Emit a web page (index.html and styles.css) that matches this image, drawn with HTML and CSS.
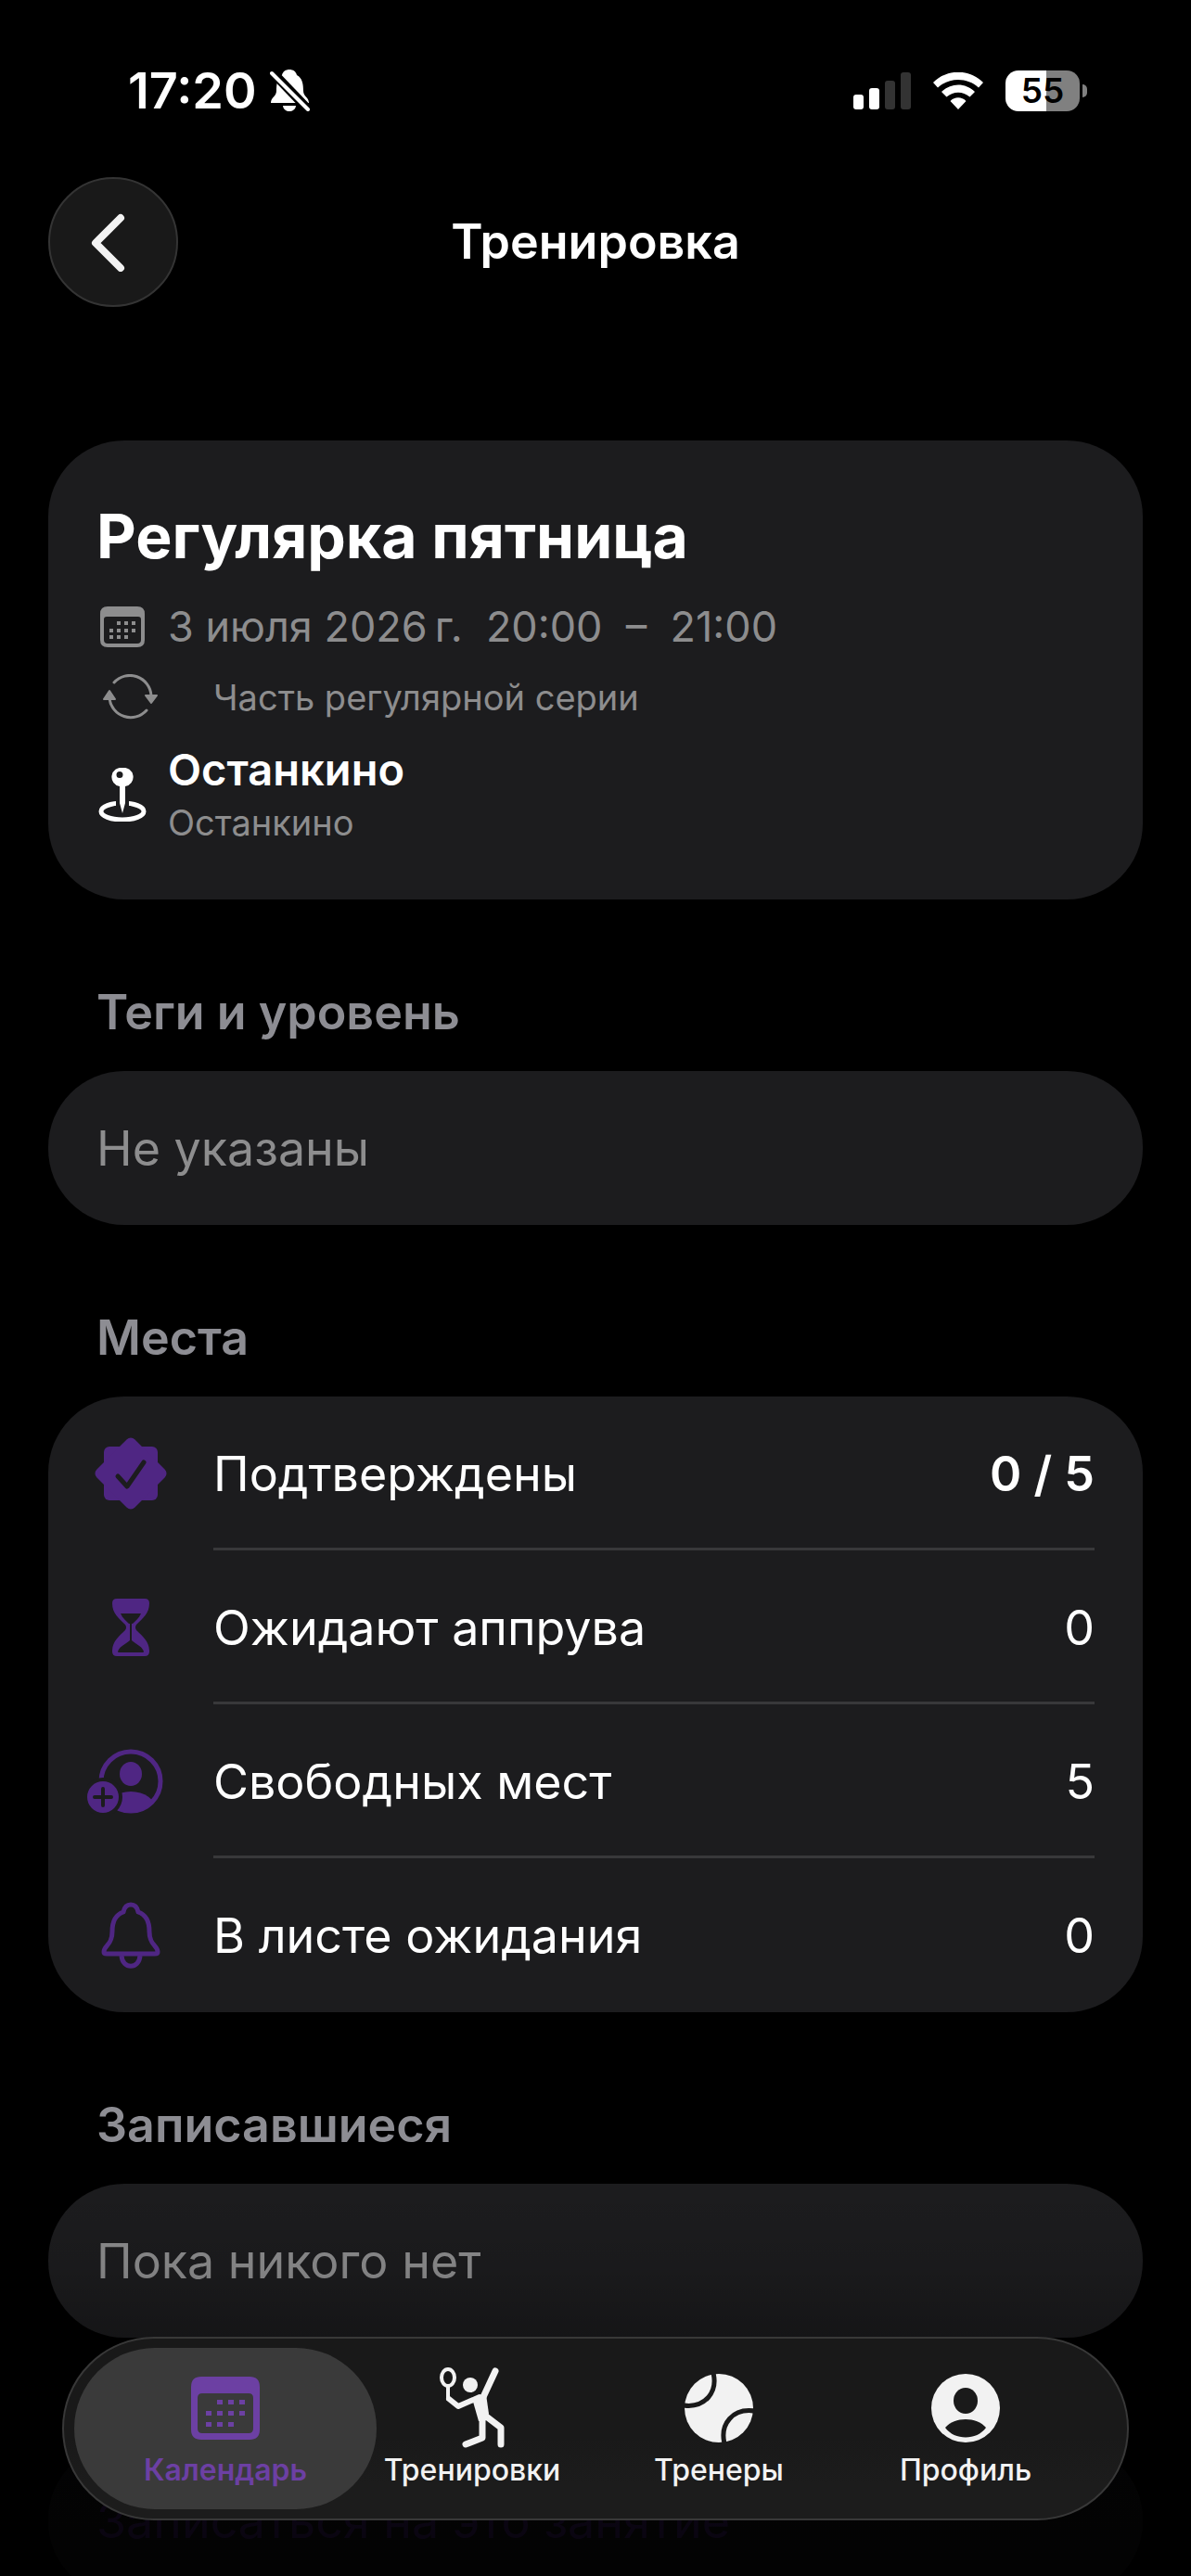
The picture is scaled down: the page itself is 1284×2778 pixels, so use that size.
FILE: index.html
```html
<!DOCTYPE html>
<html lang="ru">
<head>
    <meta charset="UTF-8">
    <meta name="viewport" content="width=device-width, initial-scale=1.0">
    <title>Тренировка</title>
    <link rel="stylesheet" href="styles.css">
</head>
<body>
    <div class="status-bar">
        <div class="status-left">
            <span class="clock">17:20</span>
            <svg width="43" height="46" viewBox="0 0 43 46">
                <path fill="#fff" d="M21 0C25 0 28 2 29 6C35 9 36 16 36 23C36 29 42 30 42 36H1C1 30 7 29 7 23C7 16 8 9 13 6C14 2 17 0 21 0ZM14 39H28C27 47 15 47 14 39Z"/>
                <path stroke="#000" stroke-width="10" d="M-2 -2L45 47"/>
                <path stroke="#fff" stroke-width="4" stroke-linecap="round" d="M2 4L41 43"/>
            </svg>
        </div>
        <div class="status-right">
            <svg width="62" height="40" viewBox="0 0 62 40">
                <rect x="0" y="24" width="11" height="16" rx="3" fill="#fff"/>
                <rect x="17" y="17" width="11" height="23" rx="3" fill="#fff"/>
                <rect x="34" y="9" width="11" height="31" rx="3" fill="#333"/>
                <rect x="51" y="0" width="11" height="40" rx="3" fill="#333"/>
            </svg>
            <svg width="54" height="40" viewBox="0 0 54 40">
                <path fill="#fff" d="M0 11C15 -4 39 -4 54 11L49 16.500C37 5 17 5 5 16.500ZM9 21C19 11 35 11 45 21L39.500 26.500C32 20 22 20 14.500 26.500ZM18.500 31C23 26 31 26 35.500 31L27 40Z"/>
            </svg>
            <div class="battery-wrap">
                <span class="battery">55</span>
                <span class="battery-cap"></span>
            </div>
        </div>
    </div>

    <header class="header">
        <button class="back-button" type="button" aria-label="Назад">
            <svg width="40" height="64" viewBox="0 0 40 64">
                <path fill="none" stroke="#f2f2f2" stroke-width="8" stroke-linecap="round" stroke-linejoin="round" d="M34 6L7 33L34 60"/>
            </svg>
        </button>
        <h1 class="header-title">Тренировка</h1>
    </header>

    <main class="content">
        <section class="card event">
            <h2 class="event-title">Регулярка пятница</h2>
            <div class="event-row">
                <span class="small-icon">
                    <svg width="48" height="44" viewBox="0 0 48 44" fill="#8d8d8e">
                        <path fill-rule="evenodd" d="M8 0H40Q48 0 48 8V36Q48 44 40 44H8Q0 44 0 36V8Q0 0 8 0ZM7 11Q4 11 4 14V36Q4 40 8 40H40Q44 40 44 36V14Q44 11 41 11Z"/>
                        <path d="M18 16h4v4h-4zM26 16h4v4h-4zM34 16h4v4h-4zM10 24h4v4h-4zM18 24h4v4h-4zM26 24h4v4h-4zM34 24h4v4h-4zM10 31h4v4h-4zM18 31h4v4h-4zM26 31h4v4h-4z"/>
                    </svg>
                </span>
                <span class="event-date">3 июля 2026&#8239;г.&nbsp; 20:00 &nbsp;–&nbsp; 21:00</span>
            </div>
            <div class="event-row series">
                <span class="icon">
                    <svg width="60" height="50" viewBox="0 0 60 50">
                        <g fill="none" stroke="#8d8d8e" stroke-width="3" stroke-linecap="round">
                            <path d="M12 9A23 23 0 0 1 52 23"/>
                            <path d="M47 39A23 23 0 0 1 7 26"/>
                        </g>
                        <path fill="#8d8d8e" stroke="#8d8d8e" stroke-width="2" stroke-linejoin="round" d="M46 23H58L52 31ZM1 27H13L7 18Z"/>
                    </svg>
                </span>
                <span class="caption">Часть регулярной серии</span>
            </div>
            <div class="event-row place">
                <span class="small-icon">
                    <svg width="52" height="58" viewBox="0 0 52 58">
                        <ellipse cx="26" cy="47" rx="23" ry="9" fill="none" stroke="#fff" stroke-width="5"/>
                        <path fill="#1c1c1e" d="M19 33H33V44H19Z"/>
                        <path fill="#fff" fill-rule="evenodd" d="M26 0A10 10 0 0 1 29 20V38L26 49L23 38V20A10 10 0 0 1 26 0ZM23 4A3 3 0 0 0 23 11A3 3 0 0 0 23 4Z"/>
                    </svg>
                </span>
                <div>
                    <div class="place-name">Останкино</div>
                    <div class="caption">Останкино</div>
                </div>
            </div>
        </section>

        <h2 class="section-title">Теги и уровень</h2>
        <section class="card single">Не указаны</section>

        <h2 class="section-title">Места</h2>
        <section class="card">
            <div class="row">
                <span class="icon">
                    <svg width="78" height="78" viewBox="0 0 78 78">
                        <rect x="10" y="10" width="58" height="58" rx="6" fill="#4f2683"/>
                        <rect x="10" y="10" width="58" height="58" rx="6" fill="#4f2683" transform="rotate(45 39 39)"/>
                        <path fill="none" stroke="#1c1c1e" stroke-width="5" stroke-linecap="round" stroke-linejoin="round" d="M25 42L35 53L53 27"/>
                    </svg>
                </span>
                <div class="row-body">
                    <span>Подтверждены</span>
                    <strong>0 / 5</strong>
                </div>
            </div>
            <div class="row">
                <span class="icon">
                    <svg width="40" height="62" viewBox="0 0 40 62">
                        <path fill="#4f2683" d="M5 0H35Q40 0 40 5C40 16 33 21 26 28Q24 31 26 34C33 41 40 46 40 57Q40 62 35 62H5Q0 62 0 57C0 46 7 41 14 34Q16 31 14 28C7 21 0 16 0 5Q0 0 5 0Z"/>
                        <path fill="#1c1c1e" d="M9 16H31C29 21 25 24 22 27H21V45C25 49 32 51 34 57Q34 58 33 58H7Q6 58 6 57C8 51 15 49 19 45V27H18C15 24 11 21 9 16Z"/>
                    </svg>
                </span>
                <div class="row-body">
                    <span>Ожидают аппрува</span>
                    <span>0</span>
                </div>
            </div>
            <div class="row">
                <span class="icon">
                    <svg class="person-icon" width="84" height="70" viewBox="0 0 84 70">
                        <defs>
                            <clipPath id="person-clip"><circle cx="47" cy="35" r="34"/></clipPath>
                        </defs>
                        <circle cx="47" cy="35" r="32" fill="none" stroke="#4f2683" stroke-width="5"/>
                        <ellipse cx="47" cy="27" rx="12" ry="13" fill="#4f2683"/>
                        <ellipse cx="47" cy="66" rx="27" ry="20" fill="#4f2683" clip-path="url(#person-clip)"/>
                        <circle cx="17" cy="52" r="21" fill="#1c1c1e"/>
                        <circle cx="17" cy="52" r="17" fill="#4f2683"/>
                        <path stroke="#1c1c1e" stroke-width="4" stroke-linecap="round" d="M8 52H26M17 43V61"/>
                    </svg>
                </span>
                <div class="row-body">
                    <span>Свободных мест</span>
                    <span>5</span>
                </div>
            </div>
            <div class="row">
                <span class="icon">
                    <svg width="64" height="72" viewBox="0 0 64 72" fill="none" stroke="#4f2683" stroke-width="5" stroke-linejoin="round">
                        <path d="M32 3C36 3 39 6 40 11C49 14 52 21 52 32C52 47 61 47 61 54Q61 56 58 56H6Q3 56 3 54C3 47 12 47 12 32C12 21 15 14 24 11C25 6 28 3 32 3Z"/>
                        <path d="M22 58C23 73 41 73 42 58"/>
                    </svg>
                </span>
                <div class="row-body">
                    <span>В листе ожидания</span>
                    <span>0</span>
                </div>
            </div>
        </section>

        <h2 class="section-title">Записавшиеся</h2>
        <section class="card single">Пока никого нет</section>

        <button class="card single join-button" type="button">Записаться на это занятие</button>
    </main>

    <div class="bottom-fade"></div>

    <nav class="tab-bar">
        <a class="tab active" href="#calendar">
            <span class="tab-icon">
                <svg width="74" height="68" viewBox="0 0 74 68" fill="#6c40a3">
                    <path fill-rule="evenodd" d="M11 0H63Q74 0 74 11V57Q74 68 63 68H11Q0 68 0 57V11Q0 0 11 0ZM12 18Q7 18 7 23V56Q7 61 12 61H62Q67 61 67 56V23Q67 18 62 18Z"/>
                    <path d="M28 25h6v5h-6zM40 25h6v5h-6zM52 25h6v5h-6zM16 37h6v5h-6zM28 37h6v5h-6zM40 37h6v5h-6zM52 37h6v5h-6zM16 49h6v5h-6zM28 49h6v5h-6zM40 49h6v5h-6z"/>
                </svg>
            </span>
            <span>Календарь</span>
        </a>
        <a class="tab" href="#trainings">
            <span class="tab-icon">
                <svg width="72" height="88" viewBox="0 0 72 88">
                    <g fill="none" stroke="#f2f2f2" stroke-linecap="round" stroke-linejoin="round">
                        <ellipse cx="10" cy="11" rx="7" ry="9" stroke-width="4"/>
                        <path stroke-width="4" d="M10 20V34"/>
                        <path stroke-width="6" d="M11 34L21 42L44 32"/>
                        <path stroke-width="7" d="M61 4L48 32"/>
                        <path stroke-width="7" d="M47 55L47 76L29 83M50 52L67 65V83"/>
                    </g>
                    <circle cx="34" cy="19" r="8" fill="#f2f2f2"/>
                    <path fill="#f2f2f2" d="M37 37L51 29L54 50L50 58L43 58Z"/>
                </svg>
            </span>
            <span>Тренировки</span>
        </a>
        <a class="tab" href="#coaches">
            <span class="tab-icon">
                <svg width="74" height="74" viewBox="0 0 74 74">
                    <circle cx="37" cy="37" r="37" fill="#f2f2f2"/>
                    <path fill="none" stroke="#1a1a1a" stroke-width="5" d="M31 -1C36 20 22 37 -1 34M75 40C52 37 38 54 43 75"/>
                </svg>
            </span>
            <span>Тренеры</span>
        </a>
        <a class="tab" href="#profile">
            <span class="tab-icon">
                <svg width="74" height="74" viewBox="0 0 74 74">
                    <circle cx="37" cy="37" r="37" fill="#f2f2f2"/>
                    <ellipse cx="37" cy="29" rx="13" ry="14" fill="#1a1a1a"/>
                    <path fill="#1a1a1a" d="M15 58C25 46 49 46 59 58C49 72 25 72 15 58Z"/>
                </svg>
            </span>
            <span>Профиль</span>
        </a>
    </nav>
</body>
</html>
```

FILE: styles.css
```css
* {
    box-sizing: border-box;
}
body {
    margin: 0;
    height: 100vh;
    display: flex;
    flex-direction: column;
    overflow: hidden;
    background-color: #000;
    color: #fff;
    font-family: Inter, "Liberation Sans", sans-serif;
    font-size: 52px;
    line-height: 60px;
}
h1, h2 {
    margin: 0;
}
button {
    border: none;
    font: inherit;
    cursor: pointer;
}
svg {
    display: block;
    flex-shrink: 0;
}

/* status bar */
.status-bar {
    display: flex;
    justify-content: space-between;
    align-items: center;
    flex-shrink: 0;
    height: 191px;
    padding: 4px 112px 0 138px;
}
.status-left {
    display: flex;
    align-items: center;
    gap: 14px;
}
.clock {
    font-size: 54px;
    font-weight: 600;
}
.status-right {
    display: flex;
    align-items: center;
    gap: 24px;
}
.battery-wrap {
    display: flex;
    align-items: center;
    gap: 3px;
}
.battery {
    width: 80px;
    height: 44px;
    border-radius: 14px;
    background: linear-gradient(to right, #fff 55%, #808080 55%);
    color: #000;
    font-size: 37px;
    font-weight: 600;
    line-height: 44px;
    text-align: center;
}
.battery-cap {
    width: 5px;
    height: 14px;
    border-radius: 0 5px 5px 0;
    background-color: #808080;
}

/* header */
.header {
    display: grid;
    grid-template-columns: 140px 1fr 140px;
    align-items: center;
    flex-shrink: 0;
    padding: 0 52px;
}
.back-button {
    display: flex;
    align-items: center;
    justify-content: center;
    width: 140px;
    height: 140px;
    padding: 0 12px 0 0;
    border: 2px solid #343434;
    border-radius: 50%;
    background-color: #191919;
}
.header-title {
    font-size: 52px;
    font-weight: 600;
    text-align: center;
}

/* content */
.content {
    flex: 1;
    min-height: 0;
    padding: 144px 52px 0;
    overflow-y: auto;
    scrollbar-width: none;
}
.card {
    padding: 0 52px;
    border-radius: 82px;
    background-color: #1c1c1e;
}
.event {
    padding-top: 67px;
    padding-bottom: 56px;
}
.event-title {
    margin-bottom: 24px;
    font-size: 66px;
    font-weight: 700;
    line-height: 72px;
}
.event-row {
    display: flex;
    align-items: center;
    gap: 21px;
    min-height: 76px;
}
.small-icon {
    display: flex;
    justify-content: center;
    width: 56px;
}
.event-date {
    color: #8d8d8e;
    font-size: 45px;
}
.caption {
    color: #8d8d8e;
    font-size: 38px;
    line-height: 54px;
}
.series {
    gap: 52px;
}
.place {
    margin-top: 10px;
}
.place-name {
    font-size: 47px;
    font-weight: 600;
}
.section-title {
    margin: 92px 52px 33px;
    color: #8d8d93;
    font-size: 52px;
    font-weight: 600;
}
.single {
    padding: 54px 52px 52px;
    color: #8d8d8e;
}
.icon {
    display: flex;
    align-items: center;
    justify-content: center;
    width: 74px;
}
.person-icon {
    margin-right: 10px;
}
.row {
    display: flex;
    gap: 52px;
}
.row-body {
    display: flex;
    flex: 1;
    align-items: center;
    justify-content: space-between;
    height: 166px;
    padding-top: 5px;
    border-bottom: 3px solid #38383a;
}
.row:last-child .row-body {
    border-bottom-color: transparent;
}
.row-body strong {
    font-weight: 600;
}
.join-button {
    display: block;
    width: 100%;
    margin-top: 114px;
    color: #5e2ca0;
    text-align: left;
}

/* tab bar */
.bottom-fade {
    position: absolute;
    right: 0;
    bottom: 0;
    left: 0;
    height: 422px;
    background: linear-gradient(to bottom, transparent 0, rgba(0, 0, 0, 0.08) 92px, rgba(0, 0, 0, 0.25) 165px, rgba(0, 0, 0, 0.88) 300px, rgba(0, 0, 0, 0.9) 100%);
    pointer-events: none;
}
.tab-bar {
    position: absolute;
    right: 67px;
    bottom: 60px;
    left: 67px;
    display: flex;
    padding: 10px 41px;
    border: 2px solid #383838;
    border-radius: 99px;
    background: linear-gradient(to bottom, #191919 55%, #1c1c1c 80%);
}
.tab {
    position: relative;
    display: flex;
    flex: 1;
    flex-direction: column;
    align-items: center;
    height: 174px;
    padding-top: 19px;
    color: #f2f2f2;
    font-size: 32px;
    font-weight: 500;
    line-height: 42px;
    text-decoration: none;
}
.tab span {
    position: relative;
}
.tab-icon {
    display: flex;
    align-items: center;
    justify-content: center;
    height: 92px;
}
.active {
    color: #6c40a3;
    font-weight: 600;
}
.active::before {
    content: "";
    position: absolute;
    inset: 0 -30px;
    border-radius: 87px;
    background-color: #3a3a3a;
}
```
